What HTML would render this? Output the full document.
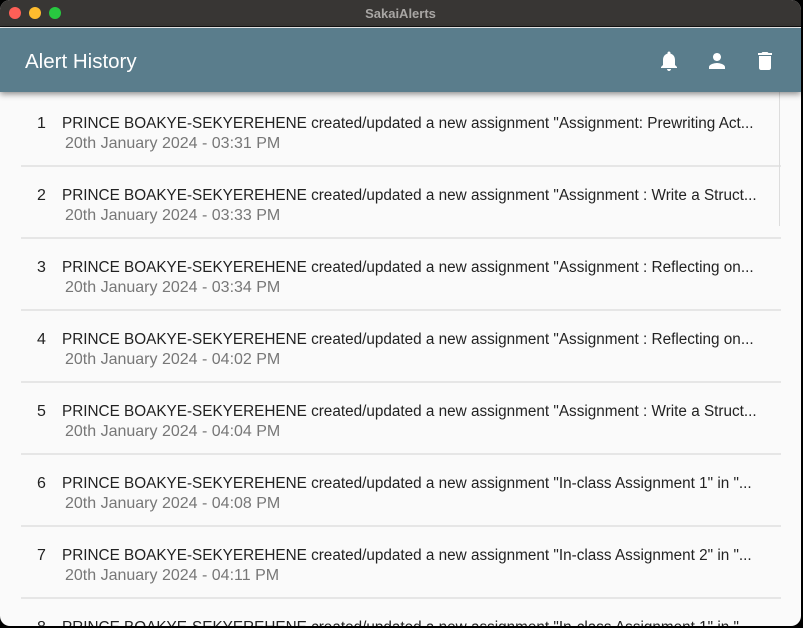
<!DOCTYPE html>
<html><head><style>
*{margin:0;padding:0;box-sizing:border-box}
html,body{width:803px;height:628px;overflow:hidden}
body{background:#000;font-family:"Liberation Sans",sans-serif;position:relative}
.win{position:absolute;left:0;top:0;width:801px;height:626px;border-radius:10px;overflow:hidden;background:#fafafa}
.tb{height:27px;background:#383634;position:relative;border-bottom:1px solid #111}
.tb .d{position:absolute;top:7px;width:12px;height:12px;border-radius:50%}
.tb .t{position:absolute;left:0;right:0;top:6px;text-align:center;color:#a8a6a4;font-size:13px;font-weight:bold}
.hd{position:absolute;top:28px;left:0;right:0;height:64px;background:#5a7d8c;box-shadow:0 2px 6px rgba(0,0,0,.45);z-index:2}
.hd .h{position:absolute;left:25px;top:22px;color:#fff;font-size:20.5px}
.list{position:absolute;top:92px;left:0;right:0;bottom:0;overflow:hidden}
.row{position:absolute;left:21px;width:760px;height:72px;border-bottom:2px solid #e6e6e6}
.n{position:absolute;left:16px;top:20px;font-size:16px;color:#222}
.ti{position:absolute;left:41px;top:20px;font-size:15.3px;color:#222;white-space:nowrap}
.dt{position:absolute;left:44px;top:40px;font-size:16px;color:#777}
.sb{position:absolute;left:779px;top:92px;width:1px;height:134px;background:#ddd;z-index:1}
</style></head><body>
<div class="win">
<div class="tb">
<div class="d" style="left:9px;background:#fe5f57"></div>
<div class="d" style="left:29px;background:#febc2e"></div>
<div class="d" style="left:49px;background:#28c840"></div>
<div class="t">SakaiAlerts</div>
</div>
<div class="hd">
<div class="h">Alert History</div>
</div>
<svg style="position:absolute;left:657px;top:49px;z-index:3" width="24" height="24" viewBox="0 0 24 24"><path fill="#fff" d="M12 22c1.1 0 2-.9 2-2h-4c0 1.1.9 2 2 2zm6-6v-5c0-3.07-1.64-5.64-4.5-6.32V4c0-.83-.67-1.5-1.5-1.5s-1.5.67-1.5 1.5v.68C7.630 5.36 6 7.92 6 11v5l-2 2v1h16v-1l-2-2z"/></svg>
<svg style="position:absolute;left:705px;top:49px;z-index:3" width="24" height="24" viewBox="0 0 24 24"><path fill="#fff" d="M12 12c2.21 0 4-1.790 4-4s-1.79-4-4-4-4 1.79-4 4 1.79 4 4 4zm0 2c-2.67 0-8 1.34-8 4v2h16v-2c0-2.66-5.33-4-8-4z"/></svg>
<svg style="position:absolute;left:753px;top:49px;z-index:3" width="24" height="24" viewBox="0 0 24 24"><path fill="#fff" d="M6 19c0 1.1.9 2 2 2h8c1.1 0 2-.9 2-2V7H6v12zM19 4h-3.5l-1-1h-5l-1 1H5v2h14V4z"/></svg>
<div class="sb"></div>
<div class="list">
<div class="row" style="top:3px"><span class="n">1</span><span class="ti">PRINCE BOAKYE-SEKYEREHENE created/updated a new assignment "Assignment: Prewriting Act...</span><span class="dt">20th January 2024 - 03:31 PM</span></div>
<div class="row" style="top:75px"><span class="n">2</span><span class="ti">PRINCE BOAKYE-SEKYEREHENE created/updated a new assignment "Assignment : Write a Struct...</span><span class="dt">20th January 2024 - 03:33 PM</span></div>
<div class="row" style="top:147px"><span class="n">3</span><span class="ti">PRINCE BOAKYE-SEKYEREHENE created/updated a new assignment "Assignment : Reflecting on...</span><span class="dt">20th January 2024 - 03:34 PM</span></div>
<div class="row" style="top:219px"><span class="n">4</span><span class="ti">PRINCE BOAKYE-SEKYEREHENE created/updated a new assignment "Assignment : Reflecting on...</span><span class="dt">20th January 2024 - 04:02 PM</span></div>
<div class="row" style="top:291px"><span class="n">5</span><span class="ti">PRINCE BOAKYE-SEKYEREHENE created/updated a new assignment "Assignment : Write a Struct...</span><span class="dt">20th January 2024 - 04:04 PM</span></div>
<div class="row" style="top:363px"><span class="n">6</span><span class="ti">PRINCE BOAKYE-SEKYEREHENE created/updated a new assignment "In-class Assignment 1" in "...</span><span class="dt">20th January 2024 - 04:08 PM</span></div>
<div class="row" style="top:435px"><span class="n">7</span><span class="ti">PRINCE BOAKYE-SEKYEREHENE created/updated a new assignment "In-class Assignment 2" in "...</span><span class="dt">20th January 2024 - 04:11 PM</span></div>
<div class="row" style="top:507px"><span class="n">8</span><span class="ti">PRINCE BOAKYE-SEKYEREHENE created/updated a new assignment "In-class Assignment 1" in "...</span></div>
</div>
</div>
</body></html>
